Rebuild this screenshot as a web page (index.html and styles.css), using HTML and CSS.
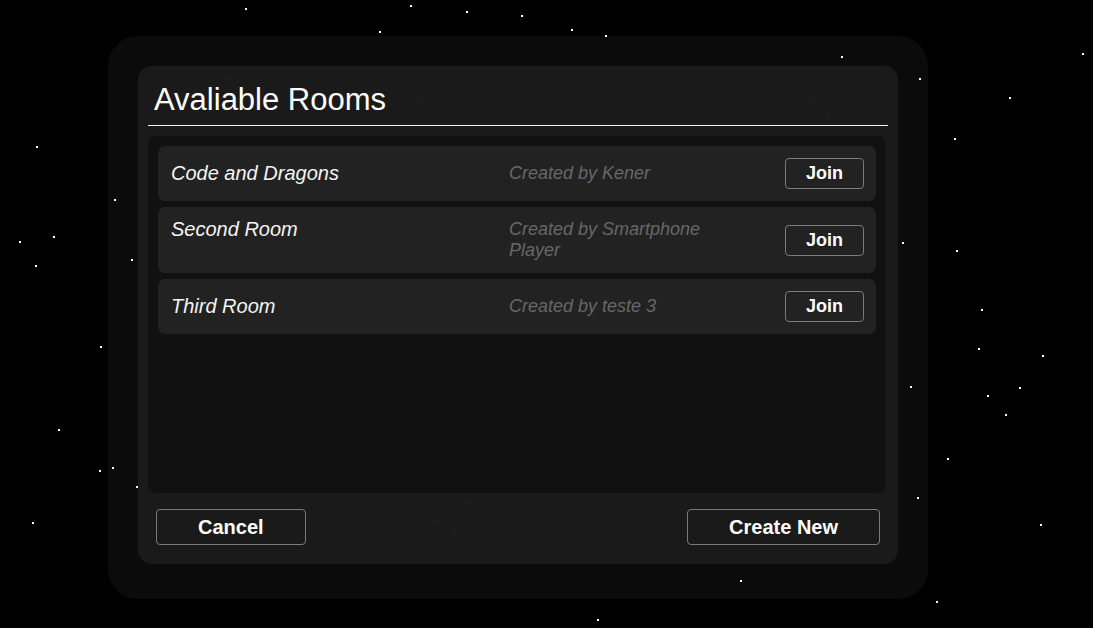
FILE: index.html
```html
<!DOCTYPE html>
<html lang="en">
<head>
<meta charset="utf-8">
<title>Avaliable Rooms</title>
<link rel="stylesheet" href="styles.css">
</head>
<body>
<svg class="stars" width="1093" height="628" viewBox="0 0 1093 628" aria-hidden="true">
  <g fill="#fff">
    <rect x="245" y="8" width="2" height="2"/>
    <rect x="410" y="5" width="2" height="2"/>
    <rect x="466" y="11" width="2" height="2"/>
    <rect x="521" y="15" width="2" height="2"/>
    <rect x="379" y="31" width="2" height="2"/>
    <rect x="571" y="29" width="2" height="2"/>
    <rect x="605" y="35" width="2" height="2"/>
    <rect x="841" y="56" width="2" height="2"/>
    <rect x="919" y="78" width="2" height="2"/>
    <rect x="1082" y="53" width="2" height="2"/>
    <rect x="1009" y="97" width="2" height="2"/>
    <rect x="954" y="138" width="2" height="2"/>
    <rect x="36" y="146" width="2" height="2"/>
    <rect x="114" y="199" width="2" height="2"/>
    <rect x="19" y="241" width="2" height="2"/>
    <rect x="53" y="236" width="2" height="2"/>
    <rect x="35" y="265" width="2" height="2"/>
    <rect x="131" y="259" width="2" height="2"/>
    <rect x="902" y="242" width="2" height="2"/>
    <rect x="956" y="250" width="2" height="2"/>
    <rect x="981" y="309" width="2" height="2"/>
    <rect x="100" y="346" width="2" height="2"/>
    <rect x="978" y="348" width="2" height="2"/>
    <rect x="1042" y="355" width="2" height="2"/>
    <rect x="910" y="386" width="2" height="2"/>
    <rect x="987" y="395" width="2" height="2"/>
    <rect x="1019" y="387" width="2" height="2"/>
    <rect x="1005" y="414" width="2" height="2"/>
    <rect x="58" y="429" width="2" height="2"/>
    <rect x="112" y="467" width="2" height="2"/>
    <rect x="99" y="470" width="2" height="2"/>
    <rect x="947" y="458" width="2" height="2"/>
    <rect x="136" y="486" width="2" height="2"/>
    <rect x="917" y="497" width="2" height="2"/>
    <rect x="32" y="522" width="2" height="2"/>
    <rect x="1040" y="524" width="2" height="2"/>
    <rect x="740" y="580" width="2" height="2"/>
    <rect x="936" y="601" width="2" height="2"/>
    <rect x="597" y="619" width="2" height="2"/>
    <rect x="228" y="78" width="2" height="2"/>
    <rect x="418" y="101" width="2" height="2"/>
    <rect x="466" y="502" width="2" height="2"/>
    <rect x="434" y="520" width="2" height="2"/>
    <rect x="454" y="530" width="2" height="2"/>
    <rect x="810" y="101" width="2" height="2"/>
    <rect x="827" y="117" width="2" height="2"/>
  </g>
</svg>
<main class="stage">
  <section class="frame">
    <div class="dialog">
      <h1 class="dialog-title">Avaliable Rooms</h1>
      <div class="room-list">
        <div class="room">
          <div class="room-info">
            <span class="room-name">Code and Dragons</span>
            <span class="room-owner">Created by Kener</span>
          </div>
          <button class="join-btn">Join</button>
        </div>
        <div class="room">
          <div class="room-info">
            <span class="room-name">Second Room</span>
            <span class="room-owner">Created by Smartphone Player</span>
          </div>
          <button class="join-btn">Join</button>
        </div>
        <div class="room">
          <div class="room-info">
            <span class="room-name">Third Room</span>
            <span class="room-owner">Created by teste 3</span>
          </div>
          <button class="join-btn">Join</button>
        </div>
      </div>
      <div class="dialog-actions">
        <button class="action-btn">Cancel</button>
        <button class="action-btn">Create New</button>
      </div>
    </div>
  </section>
</main>
</body>
</html>
```
FILE: styles.css
```css
* {
  box-sizing: border-box;
}

html, body {
  margin: 0;
  padding: 0;
  background: #000;
  height: 628px;
  overflow: hidden;
  font-family: "Liberation Sans", Arial, sans-serif;
  color: #fff;
}

.stars {
  position: absolute;
  left: 0;
  top: 0;
  z-index: 0;
}

.stage {
  position: relative;
  z-index: 1;
  padding: 36px 0 0 108px;
}

.frame {
  width: 820px;
  height: 563px;
  padding: 30px 30px 35px;
  border-radius: 30px;
  background: rgba(255, 255, 255, 0.043);
}

.dialog {
  height: 498px;
  display: flex;
  flex-direction: column;
  padding: 16px 10px 19px;
  border-radius: 14px;
  background: rgba(27, 27, 27, 0.96);
}

.dialog-title {
  margin: 0;
  padding: 0 0 8px 6px;
  font-size: 31px;
  line-height: 35px;
  font-weight: normal;
  border-bottom: 1px solid #f2f2f2;
}

.room-list {
  flex: 1;
  margin: 10px 2px 0 0;
  padding: 10px;
  display: flex;
  flex-direction: column;
  gap: 6px;
  background: rgba(17, 17, 17, 0.9);
  border-radius: 8px;
}

.room {
  display: flex;
  align-items: center;
  padding: 12px 12px 12px 13px;
  background: #222;
  border-radius: 7px;
}

.room-info {
  display: flex;
  align-items: flex-start;
}

.room-name {
  width: 338px;
  font-size: 20px;
  line-height: 21px;
  font-style: italic;
  color: #f4f4f4;
}

.room-owner {
  width: 218px;
  font-size: 18px;
  line-height: 21px;
  font-style: italic;
  color: #686868;
}

.join-btn {
  margin-left: auto;
  padding: 4px 20px;
  font-family: inherit;
  font-size: 18px;
  line-height: 21px;
  font-weight: bold;
  color: #fff;
  background: transparent;
  border: 1px solid #7a7a7a;
  border-radius: 4px;
}

.dialog-actions {
  display: flex;
  justify-content: space-between;
  padding: 16px 8px 0;
}

.action-btn {
  padding: 6px 41px;
  font-family: inherit;
  font-size: 20px;
  line-height: 22px;
  font-weight: bold;
  color: #fff;
  background: transparent;
  border: 1px solid #7a7a7a;
  border-radius: 4px;
}
```
